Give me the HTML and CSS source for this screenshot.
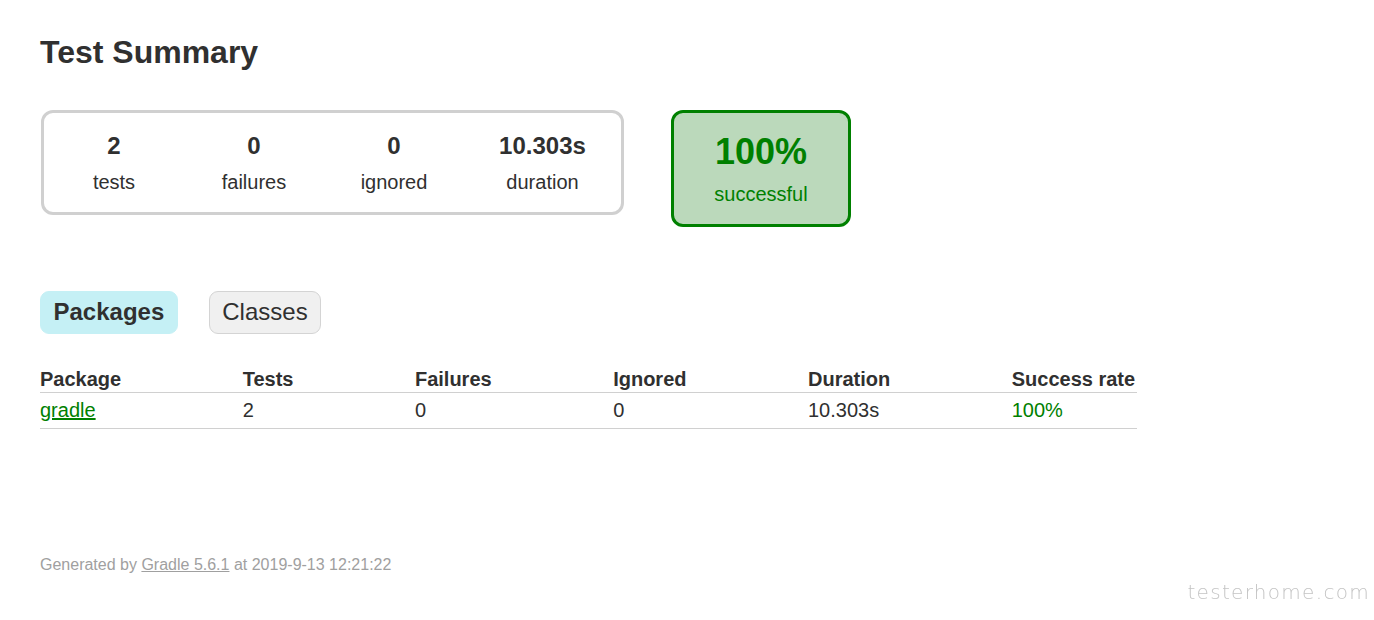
FILE: index.html
```html
<!DOCTYPE html>
<html>
<head>
<meta charset="utf-8">
<title>Test results - Test Summary</title>
<link rel="stylesheet" href="styles.css">
</head>
<body>
<div class="content">
  <h1 class="title">Test Summary</h1>
  <div class="summary">
    <div class="summary-group">
      <div class="info-box">
        <div class="counter">2</div>
        <p class="label">tests</p>
      </div>
      <div class="info-box">
        <div class="counter">0</div>
        <p class="label">failures</p>
      </div>
      <div class="info-box">
        <div class="counter">0</div>
        <p class="label">ignored</p>
      </div>
      <div class="info-box info-box-wide">
        <div class="counter">10.303s</div>
        <p class="label">duration</p>
      </div>
    </div>
    <div class="success-rate">
      <div class="percent">100%</div>
      <p class="label">successful</p>
    </div>
  </div>
  <ul class="tab-links">
    <li class="tab tab-selected"><a class="tab-link" href="#tab0">Packages</a></li>
    <li class="tab"><a class="tab-link" href="#tab1">Classes</a></li>
  </ul>
  <table class="results">
    <thead>
      <tr>
        <th class="cell">Package</th>
        <th class="cell">Tests</th>
        <th class="cell">Failures</th>
        <th class="cell">Ignored</th>
        <th class="cell">Duration</th>
        <th class="cell">Success rate</th>
      </tr>
    </thead>
    <tbody>
      <tr>
        <td class="cell success"><a class="pkg-link" href="#">gradle</a></td>
        <td class="cell">2</td>
        <td class="cell">0</td>
        <td class="cell">0</td>
        <td class="cell">10.303s</td>
        <td class="cell success">100%</td>
      </tr>
    </tbody>
  </table>
  <div class="footer">
    <p class="footer-text">Generated by <a class="footer-link" href="#">Gradle 5.6.1</a> at 2019-9-13 12:21:22</p>
  </div>
</div>
<div class="watermark">testerhome.com</div>
</body>
</html>
```

FILE: styles.css
```css
html, body {
  margin: 0;
  padding: 0;
  background: #ffffff;
}
body {
  font-family: "Liberation Sans", Arial, sans-serif;
  font-size: 20px;
  line-height: 23px;
  color: #303030;
}
.content {
  padding: 34px 40px 30px 40px;
}
.title {
  margin: 0;
  font-size: 32px;
  line-height: 37px;
  font-weight: bold;
  white-space: nowrap;
}
.summary {
  display: flex;
  align-items: flex-start;
  margin-top: 39px;
}
.summary-group {
  display: flex;
  margin-left: 1px;
  border: 3px solid #d0d0d0;
  border-radius: 12px;
}
.info-box {
  width: 140px;
  padding: 19px 0 18px 0;
  text-align: center;
}
.info-box-wide {
  width: 157px;
}
.counter {
  font-size: 24px;
  line-height: 28px;
  font-weight: bold;
  margin-bottom: 11px;
}
.label {
  margin: 0;
  font-size: 20px;
  line-height: 23px;
}
.success-rate {
  width: 174px;
  margin-left: 47px;
  padding: 18px 0 18px 0;
  text-align: center;
  border: 3px solid #008000;
  border-radius: 12px;
  background-color: #bbd9bb;
  color: #008000;
}
.percent {
  font-size: 36px;
  line-height: 41px;
  font-weight: bold;
  margin-bottom: 11px;
}
.tab-links {
  display: flex;
  gap: 31px;
  list-style: none;
  margin: 64px 0 0 0;
  padding: 0;
}
.tab {
  padding: 6px 12.5px 8px 12.5px;
  border: 1px solid #d4d4d4;
  border-radius: 9px;
  background-color: #f0f0f0;
}
.tab-selected {
  background-color: #c5f0f5;
  border-color: #c5f0f5;
}
.tab-link {
  display: block;
  font-size: 24px;
  line-height: 27px;
  color: #303030;
  text-decoration: none;
}
.tab-selected .tab-link {
  font-weight: bold;
}
.results {
  margin-top: 33px;
  border-collapse: collapse;
  border-bottom: 1px solid #d0d0d0;
}
.cell {
  text-align: left;
  white-space: nowrap;
  padding: 1px 1.5px 1px 120px;
  border-bottom: 1px solid #d0d0d0;
  line-height: 23px;
}
.cell:first-child {
  padding-left: 0;
}
td.cell {
  padding-top: 6px;
  padding-bottom: 6px;
}
.success {
  color: #008000;
}
.pkg-link {
  color: #008000;
  text-decoration: underline;
}
.footer {
  margin-top: 127px;
}
.footer-text {
  margin: 0;
  font-size: 16px;
  line-height: 18px;
  color: #a0a0a0;
  white-space: nowrap;
}
.footer-link {
  color: #a0a0a0;
  text-decoration: underline;
}
.watermark {
  position: fixed;
  right: 4px;
  bottom: 16px;
  font-family: "DejaVu Sans", sans-serif;
  font-weight: 200;
  font-size: 20px;
  line-height: 24px;
  letter-spacing: 1.3px;
  color: #c4c4c4;
}
```
